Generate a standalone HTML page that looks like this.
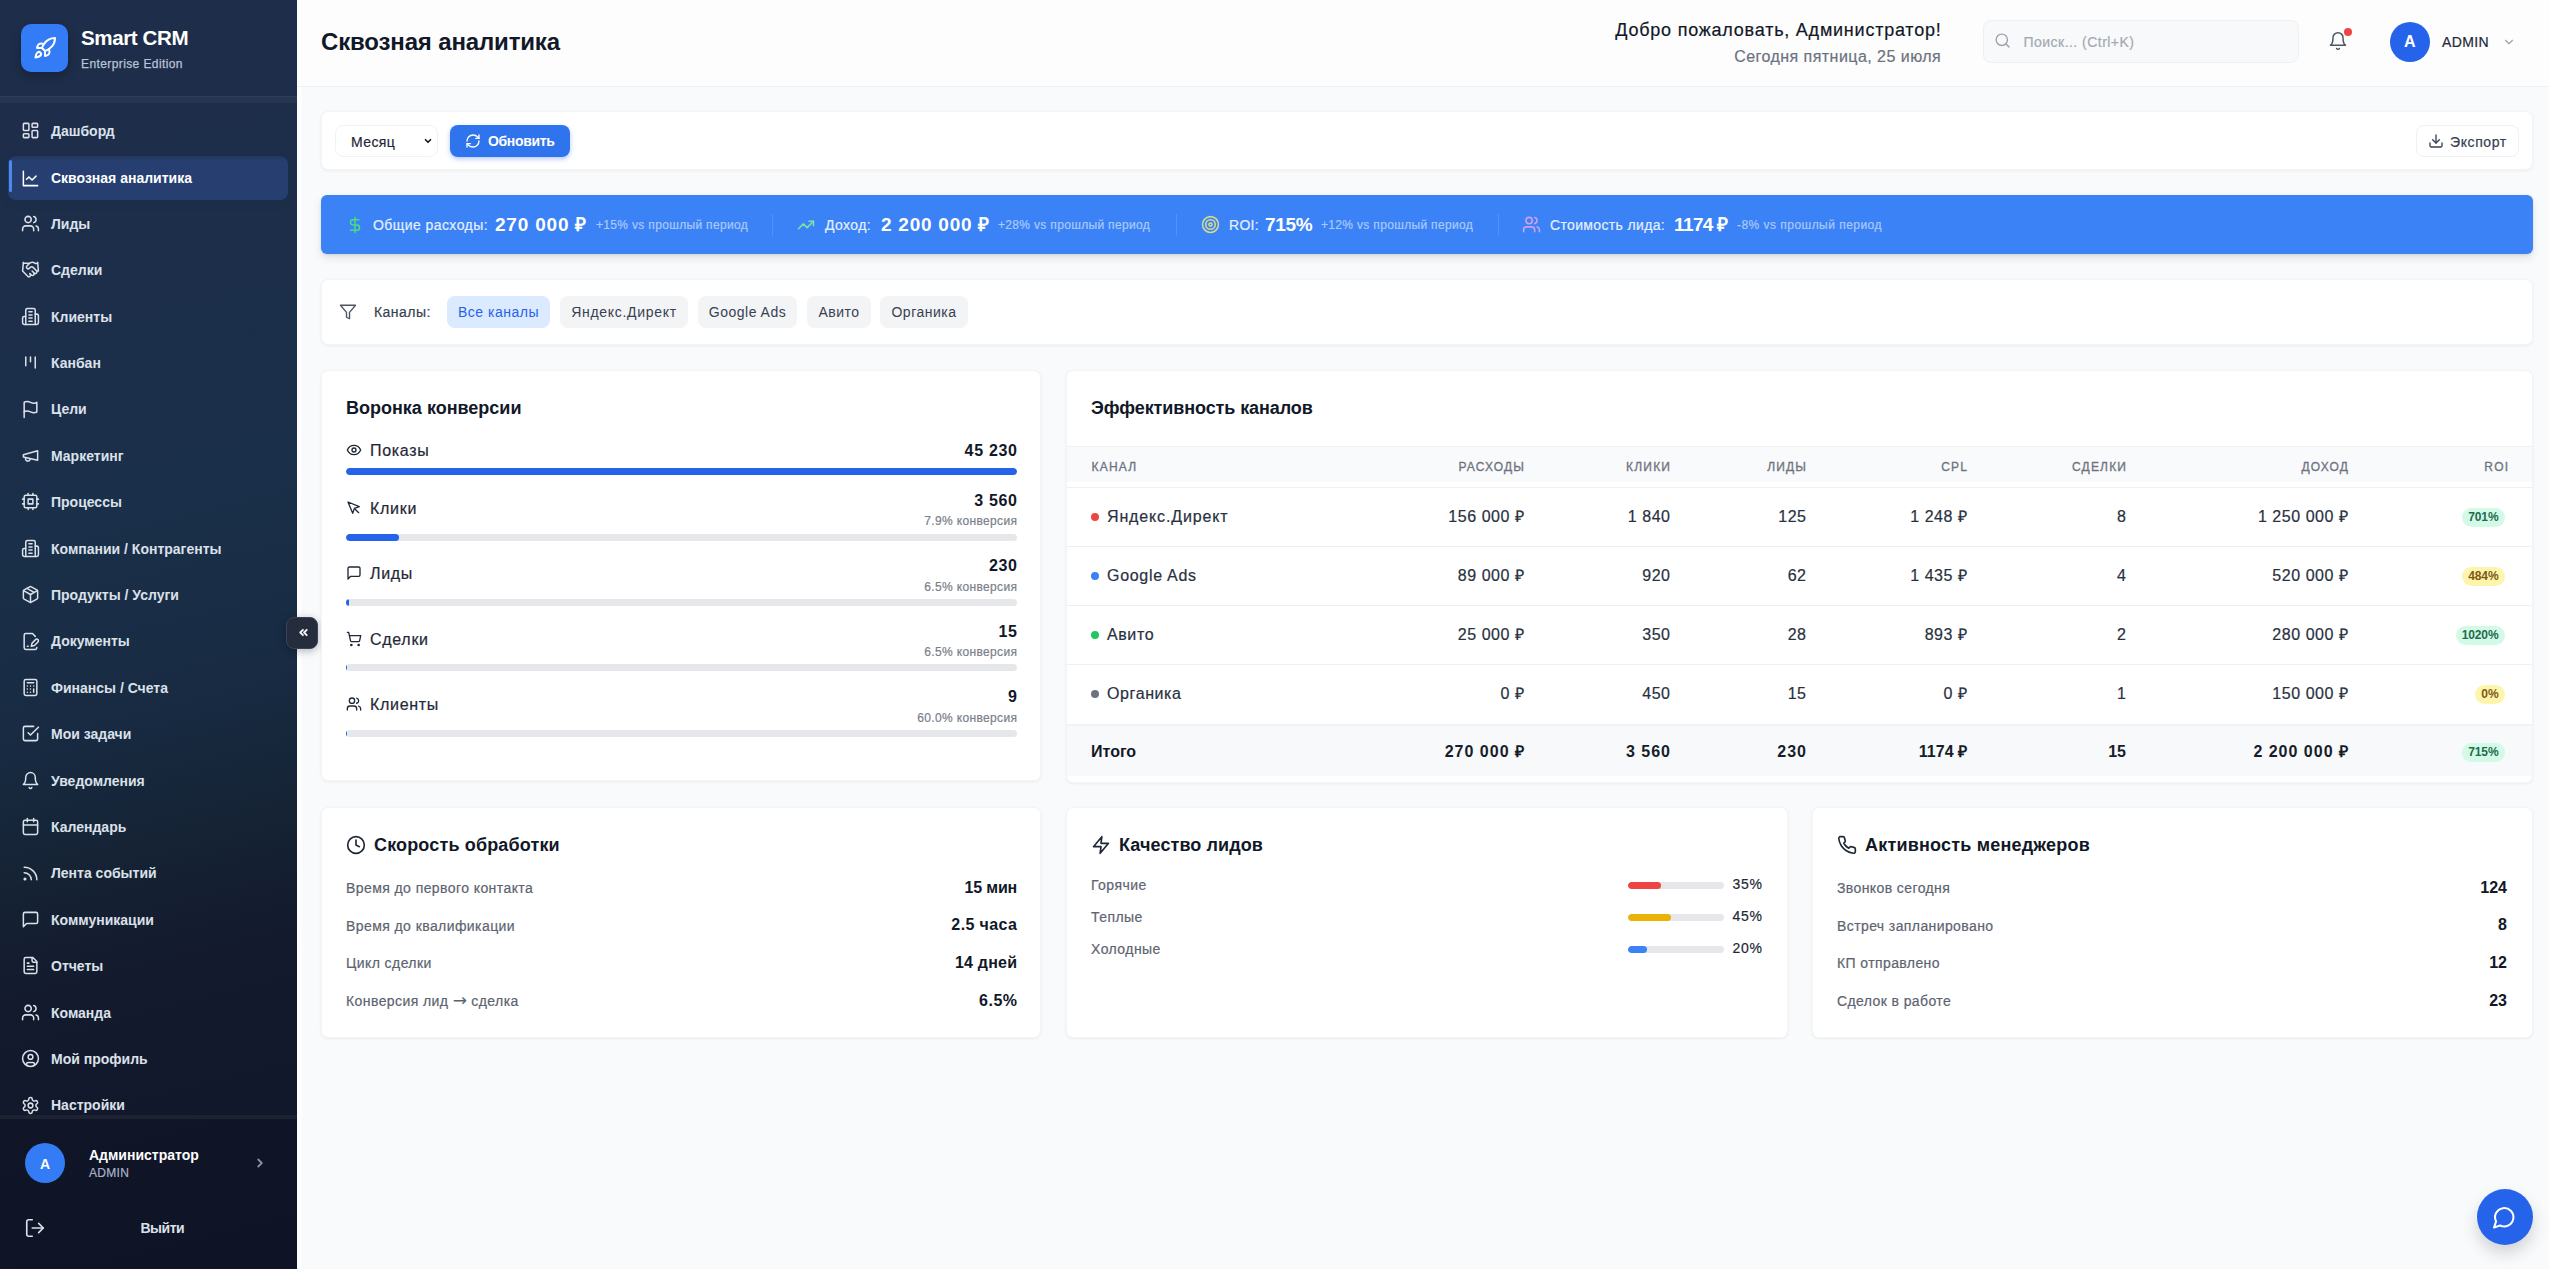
<!DOCTYPE html>
<html lang="ru">
<head>
<meta charset="utf-8">
<title>Smart CRM — Сквозная аналитика</title>
<style>
*{box-sizing:border-box;margin:0;padding:0}
html,body{width:2549px;height:1269px;overflow:hidden}
body{font-family:"Liberation Sans",sans-serif;background:#f9fafb;color:#111827;position:relative}
svg{display:block}
.ic{position:absolute;fill:none;stroke-linecap:round;stroke-linejoin:round}
.t{position:absolute;white-space:nowrap;-webkit-text-stroke:.2px}
.abs{position:absolute}
#sb{position:absolute;left:0;top:0;width:297px;height:1269px;background:linear-gradient(166deg,#1e2d4a 0%,#1d2e4a 18%,#1a2f49 40%,#182b43 55%,#152334 66%,#131a2d 75%,#10162a 100%)}
.card{position:absolute;background:#fff;border:1px solid #f3f4f5;border-radius:7px;box-shadow:0 1px 3px rgba(0,0,0,.06)}
.bsep{position:absolute;top:19px;width:1px;height:22px;background:rgba(255,255,255,.13)}
.chip{position:absolute;top:17px;height:32px;line-height:32px;border-radius:8px;background:#f3f4f6;color:#374151;font-size:14px;text-align:center;white-space:nowrap;letter-spacing:.5px}
.fb{position:absolute;left:24px;width:670.5px;height:7px;border-radius:4px;background:#e5e7eb;overflow:hidden}
.fb i{display:block;height:7px;background:#2563eb;border-radius:4px}
.dot{position:absolute;left:24px;width:8px;height:8px;border-radius:50%}
.bdg{position:absolute;height:19px;line-height:19px;font-size:12px;font-weight:700;border-radius:10px;padding:0 6px;white-space:nowrap;letter-spacing:-.1px}
.bdg.g{background:#d3fae6;color:#1f6b4f}
.bdg.y{background:#fef5ad;color:#7d5a12}
.qb{position:absolute;left:560px;width:96px;height:7px;border-radius:4px;background:#e5e7eb;overflow:hidden}
.qb i{display:block;height:7px;border-radius:4px}
.hl{position:absolute;left:0;height:1px;background:#eff0f2}
</style>
</head>
<body>
<div id="sb">
<div class="abs" style="left:21px;top:24px;width:47px;height:48px;border-radius:10px;background:#347cf6;box-shadow:0 4px 10px rgba(0,0,0,.25)"><svg class="ic" style="left:12px;top:12px;width:24px;height:24px;stroke:#fff;stroke-width:2;" viewBox="0 0 24 24"><path d="M4.5 16.5c-1.5 1.26-2 5-2 5s3.74-.5 5-2c.71-.84.7-2.13-.09-2.91a2.18 2.18 0 0 0-2.91-.09z"/><path d="m12 15-3-3a22 22 0 0 1 2-3.95A12.88 12.88 0 0 1 22 2c0 2.72-.78 7.5-6 11a22.35 22.35 0 0 1-4 2z"/><path d="M9 12H4s.55-3.03 2-4c1.62-1.08 5 0 5 0"/><path d="M12 15v5s3.03-.55 4-2c1.08-1.62 0-5 0-5"/></svg></div>
<div class="t" style="left:81px;top:24.8px;font-size:20.6px;line-height:26px;color:#fff;font-weight:700;-webkit-text-stroke:0;letter-spacing:-0.42px;">Smart CRM</div>
<div class="t" style="left:81px;top:56.8px;font-size:12px;line-height:15px;color:#b9c4d6;letter-spacing:0.4px;-webkit-text-stroke:.25px #b9c4d6;">Enterprise Edition</div>
<div class="abs" style="left:0;top:96px;width:297px;height:7px;background:rgba(255,255,255,.04);border-top:1px solid rgba(255,255,255,.05)"></div>
<div class="abs" style="left:0;top:1115px;width:297px;height:154px;background:rgba(0,0,0,.1);border-top:4px solid rgba(255,255,255,.06)"></div>
<svg class="ic" style="left:21px;top:121.1px;width:19px;height:19px;stroke:#dbe1ea;stroke-width:1.9;" viewBox="0 0 24 24"><rect width="7" height="9" x="3" y="3" rx="1"/><rect width="7" height="5" x="14" y="3" rx="1"/><rect width="7" height="9" x="14" y="12" rx="1"/><rect width="7" height="5" x="3" y="16" rx="1"/></svg>
<div class="t" style="left:51px;top:121.9px;font-size:14px;line-height:18px;color:#dbe1ea;font-weight:700;-webkit-text-stroke:0;">Дашборд</div>
<div class="abs" style="left:8px;top:156px;width:280px;height:44px;border-radius:8px;background:linear-gradient(180deg,#22375f 0%,#263f70 12%,#263f70 100%);box-shadow:0 4px 6px rgba(20,50,70,.45)"></div>
<div class="abs" style="left:9px;top:160px;width:3px;height:32px;border-radius:2px;background:#4d8af0"></div>
<svg class="ic" style="left:21px;top:168.5px;width:19px;height:19px;stroke:#fff;stroke-width:1.9;" viewBox="0 0 24 24"><path d="M3 3v18h18"/><path d="m19 9-5 5-4-4-3 3"/></svg>
<div class="t" style="left:51px;top:169.3px;font-size:14px;line-height:18px;color:#fff;font-weight:700;-webkit-text-stroke:0;">Сквозная аналитика</div>
<svg class="ic" style="left:21px;top:213.9px;width:19px;height:19px;stroke:#dbe1ea;stroke-width:1.9;" viewBox="0 0 24 24"><path d="M16 21v-2a4 4 0 0 0-4-4H6a4 4 0 0 0-4 4v2"/><circle cx="9" cy="7" r="4"/><path d="M22 21v-2a4 4 0 0 0-3-3.87"/><path d="M16 3.13a4 4 0 0 1 0 7.75"/></svg>
<div class="t" style="left:51px;top:214.7px;font-size:14px;line-height:18px;color:#dbe1ea;font-weight:700;-webkit-text-stroke:0;">Лиды</div>
<svg class="ic" style="left:21px;top:260.3px;width:19px;height:19px;stroke:#dbe1ea;stroke-width:1.9;" viewBox="0 0 24 24"><path d="m11 17 2 2a1 1 0 1 0 3-3"/><path d="m14 14 2.5 2.5a1 1 0 1 0 3-3l-3.88-3.88a3 3 0 0 0-4.24 0l-.88.88a1 1 0 1 1-3-3l2.81-2.81a5.79 5.79 0 0 1 7.06-.87l.47.28a2 2 0 0 0 1.42.25L21 4"/><path d="m21 3 1 11h-2"/><path d="M3 3 2 14l6.5 6.5a1 1 0 1 0 3-3"/><path d="M3 4h8"/></svg>
<div class="t" style="left:51px;top:261.1px;font-size:14px;line-height:18px;color:#dbe1ea;font-weight:700;-webkit-text-stroke:0;">Сделки</div>
<svg class="ic" style="left:21px;top:306.7px;width:19px;height:19px;stroke:#dbe1ea;stroke-width:1.9;" viewBox="0 0 24 24"><path d="M6 22V4a2 2 0 0 1 2-2h8a2 2 0 0 1 2 2v18Z"/><path d="M6 12H4a2 2 0 0 0-2 2v6a2 2 0 0 0 2 2h2"/><path d="M18 9h2a2 2 0 0 1 2 2v9a2 2 0 0 1-2 2h-2"/><path d="M10 6h4"/><path d="M10 10h4"/><path d="M10 14h4"/><path d="M10 18h4"/></svg>
<div class="t" style="left:51px;top:307.5px;font-size:14px;line-height:18px;color:#dbe1ea;font-weight:700;-webkit-text-stroke:0;">Клиенты</div>
<svg class="ic" style="left:21px;top:353.1px;width:19px;height:19px;stroke:#dbe1ea;stroke-width:1.9;" viewBox="0 0 24 24"><path d="M6 5v11"/><path d="M12 5v6"/><path d="M18 5v14"/></svg>
<div class="t" style="left:51px;top:353.9px;font-size:14px;line-height:18px;color:#dbe1ea;font-weight:700;-webkit-text-stroke:0;">Канбан</div>
<svg class="ic" style="left:21px;top:399.5px;width:19px;height:19px;stroke:#dbe1ea;stroke-width:1.9;" viewBox="0 0 24 24"><path d="M4 15s1-1 4-1 5 2 8 2 4-1 4-1V3s-1 1-4 1-5-2-8-2-4 1-4 1z"/><line x1="4" x2="4" y1="22" y2="15"/></svg>
<div class="t" style="left:51px;top:400.3px;font-size:14px;line-height:18px;color:#dbe1ea;font-weight:700;-webkit-text-stroke:0;">Цели</div>
<svg class="ic" style="left:21px;top:445.9px;width:19px;height:19px;stroke:#dbe1ea;stroke-width:1.9;" viewBox="0 0 24 24"><path d="m3 11 18-5v12L3 14v-3z"/><path d="M11.6 16.8a3 3 0 1 1-5.8-1.6"/></svg>
<div class="t" style="left:51px;top:446.7px;font-size:14px;line-height:18px;color:#dbe1ea;font-weight:700;-webkit-text-stroke:0;">Маркетинг</div>
<svg class="ic" style="left:21px;top:492.3px;width:19px;height:19px;stroke:#dbe1ea;stroke-width:1.9;" viewBox="0 0 24 24"><rect x="4" y="4" width="16" height="16" rx="2"/><rect x="9" y="9" width="6" height="6"/><path d="M15 2v2"/><path d="M15 20v2"/><path d="M2 15h2"/><path d="M2 9h2"/><path d="M20 15h2"/><path d="M20 9h2"/><path d="M9 2v2"/><path d="M9 20v2"/></svg>
<div class="t" style="left:51px;top:493.1px;font-size:14px;line-height:18px;color:#dbe1ea;font-weight:700;-webkit-text-stroke:0;">Процессы</div>
<svg class="ic" style="left:21px;top:538.7px;width:19px;height:19px;stroke:#dbe1ea;stroke-width:1.9;" viewBox="0 0 24 24"><path d="M6 22V4a2 2 0 0 1 2-2h8a2 2 0 0 1 2 2v18Z"/><path d="M6 12H4a2 2 0 0 0-2 2v6a2 2 0 0 0 2 2h2"/><path d="M18 9h2a2 2 0 0 1 2 2v9a2 2 0 0 1-2 2h-2"/><path d="M10 6h4"/><path d="M10 10h4"/><path d="M10 14h4"/><path d="M10 18h4"/></svg>
<div class="t" style="left:51px;top:539.5px;font-size:14px;line-height:18px;color:#dbe1ea;font-weight:700;-webkit-text-stroke:0;">Компании / Контрагенты</div>
<svg class="ic" style="left:21px;top:585.1px;width:19px;height:19px;stroke:#dbe1ea;stroke-width:1.9;" viewBox="0 0 24 24"><path d="m7.5 4.27 9 5.15"/><path d="M21 8a2 2 0 0 0-1-1.73l-7-4a2 2 0 0 0-2 0l-7 4A2 2 0 0 0 3 8v8a2 2 0 0 0 1 1.73l7 4a2 2 0 0 0 2 0l7-4A2 2 0 0 0 21 16Z"/><path d="m3.3 7 8.7 5 8.7-5"/><path d="M12 22V12"/></svg>
<div class="t" style="left:51px;top:585.9px;font-size:14px;line-height:18px;color:#dbe1ea;font-weight:700;-webkit-text-stroke:0;">Продукты / Услуги</div>
<svg class="ic" style="left:21px;top:631.5px;width:19px;height:19px;stroke:#dbe1ea;stroke-width:1.9;" viewBox="0 0 24 24"><path d="M20 19.5v.5a2 2 0 0 1-2 2H6a2 2 0 0 1-2-2V4a2 2 0 0 1 2-2h8.5L18 5.5"/><path d="M8 18h1"/><path d="M18.42 9.61a2.1 2.1 0 1 1 2.97 2.97L16.95 17 13 18l.99-3.95 4.43-4.44Z"/></svg>
<div class="t" style="left:51px;top:632.3px;font-size:14px;line-height:18px;color:#dbe1ea;font-weight:700;-webkit-text-stroke:0;">Документы</div>
<svg class="ic" style="left:21px;top:677.9px;width:19px;height:19px;stroke:#dbe1ea;stroke-width:1.9;" viewBox="0 0 24 24"><rect width="16" height="20" x="4" y="2" rx="2"/><line x1="8" x2="16" y1="6" y2="6"/><line x1="16" x2="16" y1="14" y2="18"/><path d="M16 10h.01"/><path d="M12 10h.01"/><path d="M8 10h.01"/><path d="M12 14h.01"/><path d="M8 14h.01"/><path d="M12 18h.01"/><path d="M8 18h.01"/></svg>
<div class="t" style="left:51px;top:678.7px;font-size:14px;line-height:18px;color:#dbe1ea;font-weight:700;-webkit-text-stroke:0;">Финансы / Счета</div>
<svg class="ic" style="left:21px;top:724.3px;width:19px;height:19px;stroke:#dbe1ea;stroke-width:1.9;" viewBox="0 0 24 24"><path d="m9 11 3 3L22 4"/><path d="M21 12v7a2 2 0 0 1-2 2H5a2 2 0 0 1-2-2V5a2 2 0 0 1 2-2h11"/></svg>
<div class="t" style="left:51px;top:725.1px;font-size:14px;line-height:18px;color:#dbe1ea;font-weight:700;-webkit-text-stroke:0;">Мои задачи</div>
<svg class="ic" style="left:21px;top:770.7px;width:19px;height:19px;stroke:#dbe1ea;stroke-width:1.9;" viewBox="0 0 24 24"><path d="M6 8a6 6 0 0 1 12 0c0 7 3 9 3 9H3s3-2 3-9"/><path d="M10.3 21a1.94 1.94 0 0 0 3.4 0"/></svg>
<div class="t" style="left:51px;top:771.5px;font-size:14px;line-height:18px;color:#dbe1ea;font-weight:700;-webkit-text-stroke:0;">Уведомления</div>
<svg class="ic" style="left:21px;top:817.1px;width:19px;height:19px;stroke:#dbe1ea;stroke-width:1.9;" viewBox="0 0 24 24"><rect width="18" height="18" x="3" y="4" rx="2" ry="2"/><line x1="16" x2="16" y1="2" y2="6"/><line x1="8" x2="8" y1="2" y2="6"/><line x1="3" x2="21" y1="10" y2="10"/></svg>
<div class="t" style="left:51px;top:817.9px;font-size:14px;line-height:18px;color:#dbe1ea;font-weight:700;-webkit-text-stroke:0;">Календарь</div>
<svg class="ic" style="left:21px;top:863.5px;width:19px;height:19px;stroke:#dbe1ea;stroke-width:1.9;" viewBox="0 0 24 24"><path d="M4 11a9 9 0 0 1 9 9"/><path d="M4 4a16 16 0 0 1 16 16"/><circle cx="5" cy="19" r="1"/></svg>
<div class="t" style="left:51px;top:864.3px;font-size:14px;line-height:18px;color:#dbe1ea;font-weight:700;-webkit-text-stroke:0;">Лента событий</div>
<svg class="ic" style="left:21px;top:909.9px;width:19px;height:19px;stroke:#dbe1ea;stroke-width:1.9;" viewBox="0 0 24 24"><path d="M21 15a2 2 0 0 1-2 2H7l-4 4V5a2 2 0 0 1 2-2h14a2 2 0 0 1 2 2z"/></svg>
<div class="t" style="left:51px;top:910.7px;font-size:14px;line-height:18px;color:#dbe1ea;font-weight:700;-webkit-text-stroke:0;">Коммуникации</div>
<svg class="ic" style="left:21px;top:956.3px;width:19px;height:19px;stroke:#dbe1ea;stroke-width:1.9;" viewBox="0 0 24 24"><path d="M15 2H6a2 2 0 0 0-2 2v16a2 2 0 0 0 2 2h12a2 2 0 0 0 2-2V7Z"/><path d="M14 2v4a2 2 0 0 0 2 2h4"/><path d="M10 9H8"/><path d="M16 13H8"/><path d="M16 17H8"/></svg>
<div class="t" style="left:51px;top:957.1px;font-size:14px;line-height:18px;color:#dbe1ea;font-weight:700;-webkit-text-stroke:0;">Отчеты</div>
<svg class="ic" style="left:21px;top:1002.7px;width:19px;height:19px;stroke:#dbe1ea;stroke-width:1.9;" viewBox="0 0 24 24"><path d="M16 21v-2a4 4 0 0 0-4-4H6a4 4 0 0 0-4 4v2"/><circle cx="9" cy="7" r="4"/><path d="M22 21v-2a4 4 0 0 0-3-3.87"/><path d="M16 3.13a4 4 0 0 1 0 7.75"/></svg>
<div class="t" style="left:51px;top:1003.5px;font-size:14px;line-height:18px;color:#dbe1ea;font-weight:700;-webkit-text-stroke:0;">Команда</div>
<svg class="ic" style="left:21px;top:1049.1px;width:19px;height:19px;stroke:#dbe1ea;stroke-width:1.9;" viewBox="0 0 24 24"><circle cx="12" cy="12" r="10"/><circle cx="12" cy="10" r="3"/><path d="M7 20.662V19a2 2 0 0 1 2-2h6a2 2 0 0 1 2 2v1.662"/></svg>
<div class="t" style="left:51px;top:1049.9px;font-size:14px;line-height:18px;color:#dbe1ea;font-weight:700;-webkit-text-stroke:0;">Мой профиль</div>
<svg class="ic" style="left:21px;top:1095.5px;width:19px;height:19px;stroke:#dbe1ea;stroke-width:1.9;" viewBox="0 0 24 24"><path d="M12.22 2h-.44a2 2 0 0 0-2 2v.18a2 2 0 0 1-1 1.73l-.43.25a2 2 0 0 1-2 0l-.15-.08a2 2 0 0 0-2.73.73l-.22.38a2 2 0 0 0 .73 2.73l.15.1a2 2 0 0 1 1 1.72v.51a2 2 0 0 1-1 1.74l-.15.09a2 2 0 0 0-.73 2.73l.22.38a2 2 0 0 0 2.73.73l.15-.08a2 2 0 0 1 2 0l.43.25a2 2 0 0 1 1 1.73V20a2 2 0 0 0 2 2h.44a2 2 0 0 0 2-2v-.18a2 2 0 0 1 1-1.73l.43-.25a2 2 0 0 1 2 0l.15.08a2 2 0 0 0 2.73-.73l.22-.39a2 2 0 0 0-.73-2.73l-.15-.08a2 2 0 0 1-1-1.74v-.5a2 2 0 0 1 1-1.74l.15-.09a2 2 0 0 0 .73-2.73l-.22-.38a2 2 0 0 0-2.73-.73l-.15.08a2 2 0 0 1-2 0l-.43-.25a2 2 0 0 1-1-1.73V4a2 2 0 0 0-2-2z"/><circle cx="12" cy="12" r="3"/></svg>
<div class="t" style="left:51px;top:1096.3px;font-size:14px;line-height:18px;color:#dbe1ea;font-weight:700;-webkit-text-stroke:0;">Настройки</div>
<div class="abs" style="left:25px;top:1143px;width:40px;height:40px;border-radius:50%;background:#347cf6"></div>
<div class="t" style="left:40px;top:1154.5px;font-size:14px;line-height:18px;color:#fff;font-weight:700;-webkit-text-stroke:0;">A</div>
<div class="t" style="left:89px;top:1145.5px;font-size:14px;line-height:18px;color:#fff;font-weight:700;-webkit-text-stroke:0;">Администратор</div>
<div class="t" style="left:89px;top:1166px;font-size:12px;line-height:15px;color:#a9b4c6;letter-spacing:0.3px;">ADMIN</div>
<svg class="ic" style="left:253px;top:1156px;width:14px;height:14px;stroke:#8390a7;stroke-width:3.2;" viewBox="0 0 24 24"><path d="m9 18 6-6-6-6"/></svg>
<svg class="ic" style="left:24px;top:1217px;width:22px;height:22px;stroke:#dbe1ea;stroke-width:1.8;" viewBox="0 0 24 24"><path d="M9 21H5a2 2 0 0 1-2-2V5a2 2 0 0 1 2-2h4"/><polyline points="16 17 21 12 16 7"/><line x1="21" x2="9" y1="12" y2="12"/></svg>
<div class="t" style="left:140.5px;top:1219px;font-size:14px;line-height:18px;color:#dbe1ea;font-weight:700;-webkit-text-stroke:0;letter-spacing:-0.5px;">Выйти</div>
</div>
<div class="abs" style="left:297px;top:0;width:2252px;height:87px;background:#fdfdfd;border-bottom:1px solid #eef0f2"></div>
<div class="t" style="left:321px;top:27px;font-size:24px;line-height:30px;color:#111827;font-weight:700;-webkit-text-stroke:0;letter-spacing:-0.15px;">Сквозная аналитика</div>
<div class="t" style="right:607.53px;top:18.8px;font-size:18px;line-height:22px;color:#111827;letter-spacing:0.77px;-webkit-text-stroke:.2px #111827;">Добро пожаловать, Администратор!</div>
<div class="t" style="right:607.84px;top:46.5px;font-size:16px;line-height:20px;color:#6b7280;letter-spacing:0.46px;">Сегодня пятница, 25 июля</div>
<div class="abs" style="left:1983px;top:20px;width:316px;height:43px;border:1px solid #eff0f2;border-radius:8px;background:#f8f9fa"></div>
<svg class="ic" style="left:1994px;top:32px;width:17px;height:17px;stroke:#9ca3af;stroke-width:2;" viewBox="0 0 24 24"><circle cx="11" cy="11" r="8"/><path d="m21 21-4.3-4.3"/></svg>
<div class="t" style="left:2023.5px;top:32.8px;font-size:14px;line-height:18px;color:#a3a9b3;letter-spacing:0.47px;">Поиск... (Ctrl+K)</div>
<svg class="ic" style="left:2328px;top:31px;width:20px;height:20px;stroke:#4b5563;stroke-width:1.8;" viewBox="0 0 24 24"><path d="M6 8a6 6 0 0 1 12 0c0 7 3 9 3 9H3s3-2 3-9"/><path d="M10.3 21a1.94 1.94 0 0 0 3.4 0"/></svg>
<div class="abs" style="left:2344px;top:28px;width:8px;height:8px;border-radius:50%;background:#ef4444"></div>
<div class="abs" style="left:2389.8px;top:21.8px;width:40px;height:40px;border-radius:50%;background:#2563eb"></div>
<div class="t" style="left:2404px;top:32px;font-size:16px;line-height:20px;color:#fff;font-weight:700;-webkit-text-stroke:0;">A</div>
<div class="t" style="left:2442px;top:32.5px;font-size:14px;line-height:18px;color:#1f2937;letter-spacing:0.4px;">ADMIN</div>
<svg class="ic" style="left:2502px;top:35px;width:14px;height:14px;stroke:#9ca3af;stroke-width:2;" viewBox="0 0 24 24"><path d="m6 9 6 6 6-6"/></svg>
<div class="abs" style="left:297px;top:87px;width:5px;height:1182px;background:#fdfdfe"></div>
<div class="abs" style="left:286px;top:616.5px;width:31.5px;height:32px;border-radius:8px;background:#252d3c;border:1.5px solid #38425a;box-shadow:0 2px 8px rgba(0,0,0,.28)"><svg class="ic" style="left:9.5px;top:8px;width:13px;height:13px;stroke:#f1f3f6;stroke-width:3.4;" viewBox="0 0 24 24"><path d="m11 17-5-5 5-5"/><path d="m18 17-5-5 5-5"/></svg></div>
<div class="card" style="left:321px;top:111px;width:2212px;height:59px"></div>
<div class="abs" style="left:335px;top:125px;width:103px;height:32px;border:1px solid #f1f2f4;border-radius:8px;background:#fff"></div>
<div class="t" style="left:351px;top:132.5px;font-size:14px;line-height:18px;color:#1f2937;letter-spacing:0.4px;">Месяц</div>
<svg class="ic" style="left:423px;top:136px;width:10px;height:10px;stroke:#111827;stroke-width:4;" viewBox="0 0 24 24"><path d="m6 9 6 6 6-6"/></svg>
<div class="abs" style="left:450px;top:125px;width:120px;height:32px;border-radius:8px;background:#2f74ec;box-shadow:0 2px 5px rgba(37,99,235,.35)"></div>
<svg class="ic" style="left:465px;top:133px;width:16px;height:16px;stroke:#fff;stroke-width:2;" viewBox="0 0 24 24"><path d="M3 12a9 9 0 0 1 9-9 9.75 9.75 0 0 1 6.74 2.74L21 8"/><path d="M21 3v5h-5"/><path d="M21 12a9 9 0 0 1-9 9 9.75 9.75 0 0 1-6.74-2.74L3 16"/><path d="M8 16H3v5"/></svg>
<div class="t" style="left:488px;top:132px;font-size:14px;line-height:18px;color:#fff;font-weight:700;-webkit-text-stroke:0;letter-spacing:-0.35px;">Обновить</div>
<div class="abs" style="left:2416px;top:125px;width:103px;height:32px;border:1px solid #f0f1f3;border-radius:8px;background:#fff"></div>
<svg class="ic" style="left:2428px;top:133px;width:16px;height:16px;stroke:#374151;stroke-width:2;" viewBox="0 0 24 24"><path d="M21 15v4a2 2 0 0 1-2 2H5a2 2 0 0 1-2-2v-4"/><polyline points="7 10 12 15 17 10"/><line x1="12" x2="12" y1="15" y2="3"/></svg>
<div class="t" style="left:2450px;top:132.5px;font-size:14px;line-height:18px;color:#374151;letter-spacing:0.6px;">Экспорт</div>
<div class="abs" style="left:321px;top:195px;width:2212px;height:59px;border-radius:6px;background:#3b82f6;box-shadow:0 4px 8px rgba(0,0,0,.1),0 1px 3px rgba(0,0,0,.08)"></div>
<svg class="ic" style="left:346px;top:216px;width:18px;height:18px;stroke:#4ade80;stroke-width:2;" viewBox="0 0 24 24"><line x1="12" x2="12" y1="2" y2="22"/><path d="M17 5H9.5a3.5 3.5 0 0 0 0 7h5a3.5 3.5 0 0 1 0 7H6"/></svg>
<svg class="ic" style="left:797px;top:216px;width:18px;height:18px;stroke:#7be3a8;stroke-width:2;" viewBox="0 0 24 24"><polyline points="22 7 13.5 15.5 8.5 10.5 2 17"/><polyline points="16 7 22 7 22 13"/></svg>
<svg class="ic" style="left:1201px;top:215px;width:19px;height:19px;stroke:#d2db8c;stroke-width:2;" viewBox="0 0 24 24"><circle cx="12" cy="12" r="10"/><circle cx="12" cy="12" r="6"/><circle cx="12" cy="12" r="2"/></svg>
<svg class="ic" style="left:1522px;top:215px;width:19px;height:19px;stroke:#cfa0f0;stroke-width:2;" viewBox="0 0 24 24"><path d="M16 21v-2a4 4 0 0 0-4-4H6a4 4 0 0 0-4 4v2"/><circle cx="9" cy="7" r="4"/><path d="M22 21v-2a4 4 0 0 0-3-3.87"/><path d="M16 3.13a4 4 0 0 1 0 7.75"/></svg>
<div class="t" style="left:373px;top:216px;font-size:14px;line-height:18px;color:#e6efff;letter-spacing:0.43px;">Общие расходы:</div>
<div class="t" style="left:495px;top:212.5px;font-size:19px;line-height:24px;color:#fff;font-weight:700;-webkit-text-stroke:0;letter-spacing:0.8px;">270 000 ₽</div>
<div class="t" style="left:596px;top:217.5px;font-size:12px;line-height:15px;color:#abc9fb;letter-spacing:0.33px;">+15% vs прошлый период</div>
<div class="t" style="left:825px;top:216px;font-size:14px;line-height:18px;color:#e6efff;letter-spacing:0.4px;">Доход:</div>
<div class="t" style="left:881px;top:212.5px;font-size:19px;line-height:24px;color:#fff;font-weight:700;-webkit-text-stroke:0;letter-spacing:0.75px;">2 200 000 ₽</div>
<div class="t" style="left:998px;top:217.5px;font-size:12px;line-height:15px;color:#abc9fb;letter-spacing:0.33px;">+28% vs прошлый период</div>
<div class="t" style="left:1229px;top:216px;font-size:14px;line-height:18px;color:#e6efff;letter-spacing:0.3px;">ROI:</div>
<div class="t" style="left:1265px;top:212.5px;font-size:19px;line-height:24px;color:#fff;font-weight:700;-webkit-text-stroke:0;letter-spacing:-0.35px;">715%</div>
<div class="t" style="left:1321px;top:217.5px;font-size:12px;line-height:15px;color:#abc9fb;letter-spacing:0.33px;">+12% vs прошлый период</div>
<div class="t" style="left:1550px;top:216px;font-size:14px;line-height:18px;color:#e6efff;letter-spacing:0.35px;">Стоимость лида:</div>
<div class="t" style="left:1674px;top:212.5px;font-size:19px;line-height:24px;color:#fff;font-weight:700;-webkit-text-stroke:0;letter-spacing:-0.6px;">1174 ₽</div>
<div class="t" style="left:1737px;top:217.5px;font-size:12px;line-height:15px;color:#abc9fb;letter-spacing:0.47px;">-8% vs прошлый период</div>
<div class="bsep" style="left:772px;top:214px"></div>
<div class="bsep" style="left:1176px;top:214px"></div>
<div class="bsep" style="left:1498px;top:214px"></div>
<div class="card" style="left:321px;top:279px;width:2212px;height:66px"></div>
<svg class="ic" style="left:339px;top:303px;width:18px;height:18px;stroke:#4b5563;stroke-width:1.8;" viewBox="0 0 24 24"><polygon points="22 3 2 3 10 12.46 10 19 14 21 14 12.46 22 3"/></svg>
<div class="t" style="left:374px;top:302.8px;font-size:14px;line-height:18px;color:#374151;letter-spacing:0.45px;">Каналы:</div>
<div class="chip" style="left:447px;top:296px;width:103px;background:#dbeafe;color:#2563eb">Все каналы</div>
<div class="chip" style="left:560px;top:296px;width:128px;letter-spacing:.7px">Яндекс.Директ</div>
<div class="chip" style="left:698px;top:296px;width:99px;">Google Ads</div>
<div class="chip" style="left:807px;top:296px;width:64px;">Авито</div>
<div class="chip" style="left:880px;top:296px;width:88px;">Органика</div>
<div class="card" style="left:321px;top:370px;width:720px;height:411px"></div>
<div class="t" style="left:346px;top:397px;font-size:18px;line-height:22px;color:#111827;font-weight:700;-webkit-text-stroke:0;">Воронка конверсии</div>
<svg class="ic" style="left:346px;top:442.0px;width:16px;height:16px;stroke:#1f2937;stroke-width:2;" viewBox="0 0 24 24"><path d="M2 12s3-7 10-7 10 7 10 7-3 7-10 7-10-7-10-7Z"/><circle cx="12" cy="12" r="3"/></svg>
<div class="t" style="left:370px;top:440.5px;font-size:16px;line-height:20px;color:#1f2937;letter-spacing:0.7px;">Показы</div>
<div class="t" style="right:1531.3px;top:440.5px;font-size:16px;line-height:20px;color:#111827;font-weight:700;-webkit-text-stroke:0;letter-spacing:0.7px;">45 230</div>
<div class="fb" style="left:346px;top:468px"><i style="width:100%"></i></div>
<svg class="ic" style="left:346px;top:500.0px;width:16px;height:16px;stroke:#1f2937;stroke-width:2;" viewBox="0 0 24 24"><path d="m3 3 7.07 16.97 2.51-7.39 7.39-2.51L3 3z"/><path d="m13 13 6 6"/></svg>
<div class="t" style="left:370px;top:498.5px;font-size:16px;line-height:20px;color:#1f2937;letter-spacing:0.7px;">Клики</div>
<div class="t" style="right:1531.3px;top:490.5px;font-size:16px;line-height:20px;color:#111827;font-weight:700;-webkit-text-stroke:0;letter-spacing:0.7px;">3 560</div>
<div class="t" style="right:1531.65px;top:514px;font-size:12px;line-height:15px;color:#7a808a;letter-spacing:0.35px;">7.9% конверсия</div>
<div class="fb" style="left:346px;top:533.5px"><i style="width:7.9%"></i></div>
<svg class="ic" style="left:346px;top:565.0px;width:16px;height:16px;stroke:#1f2937;stroke-width:2;" viewBox="0 0 24 24"><path d="M21 15a2 2 0 0 1-2 2H7l-4 4V5a2 2 0 0 1 2-2h14a2 2 0 0 1 2 2z"/></svg>
<div class="t" style="left:370px;top:563.5px;font-size:16px;line-height:20px;color:#1f2937;letter-spacing:0.7px;">Лиды</div>
<div class="t" style="right:1531.3px;top:555.5px;font-size:16px;line-height:20px;color:#111827;font-weight:700;-webkit-text-stroke:0;letter-spacing:0.7px;">230</div>
<div class="t" style="right:1531.65px;top:580.1px;font-size:12px;line-height:15px;color:#7a808a;letter-spacing:0.35px;">6.5% конверсия</div>
<div class="fb" style="left:346px;top:599px"><i style="width:0.5%"></i></div>
<svg class="ic" style="left:346px;top:631.0px;width:16px;height:16px;stroke:#1f2937;stroke-width:2;" viewBox="0 0 24 24"><circle cx="8" cy="21" r="1"/><circle cx="19" cy="21" r="1"/><path d="M2.05 2.05h2l2.66 12.42a2 2 0 0 0 2 1.58h9.78a2 2 0 0 0 1.95-1.57l1.65-7.43H5.12"/></svg>
<div class="t" style="left:370px;top:629.5px;font-size:16px;line-height:20px;color:#1f2937;letter-spacing:0.7px;">Сделки</div>
<div class="t" style="right:1531.3px;top:621.5px;font-size:16px;line-height:20px;color:#111827;font-weight:700;-webkit-text-stroke:0;letter-spacing:0.7px;">15</div>
<div class="t" style="right:1531.65px;top:644.9px;font-size:12px;line-height:15px;color:#7a808a;letter-spacing:0.35px;">6.5% конверсия</div>
<div class="fb" style="left:346px;top:664px"><i style="width:0.15%"></i></div>
<svg class="ic" style="left:346px;top:696.0px;width:16px;height:16px;stroke:#1f2937;stroke-width:2;" viewBox="0 0 24 24"><path d="M16 21v-2a4 4 0 0 0-4-4H6a4 4 0 0 0-4 4v2"/><circle cx="9" cy="7" r="4"/><path d="M22 21v-2a4 4 0 0 0-3-3.87"/><path d="M16 3.13a4 4 0 0 1 0 7.75"/></svg>
<div class="t" style="left:370px;top:694.5px;font-size:16px;line-height:20px;color:#1f2937;letter-spacing:0.7px;">Клиенты</div>
<div class="t" style="right:1531.3px;top:687px;font-size:16px;line-height:20px;color:#111827;font-weight:700;-webkit-text-stroke:0;letter-spacing:0.7px;">9</div>
<div class="t" style="right:1531.65px;top:711.1px;font-size:12px;line-height:15px;color:#7a808a;letter-spacing:0.35px;">60.0% конверсия</div>
<div class="fb" style="left:346px;top:730.3px"><i style="width:0.1%"></i></div>
<div class="card" style="left:1066px;top:370px;width:1467px;height:413px"></div>
<div class="t" style="left:1091px;top:397px;font-size:18px;line-height:22px;color:#111827;font-weight:700;-webkit-text-stroke:0;letter-spacing:-0.1px;">Эффективность каналов</div>
<div class="abs" style="left:1067px;top:446px;width:1465px;height:36px;background:#f9fafb;border-top:1px solid #f0f1f3"></div><div class="hl" style="left:1067px;width:1465px;top:487px"></div>
<div class="abs" style="left:1067px;top:724px;width:1465px;height:52px;background:#f8f9fa;border-top:2px solid #f1f2f4"></div>
<div class="t" style="left:1091.5px;top:459.5px;font-size:12px;line-height:15px;color:#6b7280;letter-spacing:1.2px;-webkit-text-stroke:.3px #6b7280;">КАНАЛ</div>
<div class="t" style="right:1023.8px;top:459.5px;font-size:12px;line-height:15px;color:#6f7480;letter-spacing:1.2px;-webkit-text-stroke:.3px #6b7280;">РАСХОДЫ</div>
<div class="t" style="right:877.8px;top:459.5px;font-size:12px;line-height:15px;color:#6f7480;letter-spacing:1.2px;-webkit-text-stroke:.3px #6b7280;">КЛИКИ</div>
<div class="t" style="right:741.8px;top:459.5px;font-size:12px;line-height:15px;color:#6f7480;letter-spacing:1.2px;-webkit-text-stroke:.3px #6b7280;">ЛИДЫ</div>
<div class="t" style="right:580.8px;top:459.5px;font-size:12px;line-height:15px;color:#6f7480;letter-spacing:1.2px;-webkit-text-stroke:.3px #6b7280;">CPL</div>
<div class="t" style="right:421.8px;top:459.5px;font-size:12px;line-height:15px;color:#6f7480;letter-spacing:1.2px;-webkit-text-stroke:.3px #6b7280;">СДЕЛКИ</div>
<div class="t" style="right:199.8px;top:459.5px;font-size:12px;line-height:15px;color:#6f7480;letter-spacing:1.2px;-webkit-text-stroke:.3px #6b7280;">ДОХОД</div>
<div class="t" style="right:39.8px;top:459.5px;font-size:12px;line-height:15px;color:#6f7480;letter-spacing:1.2px;-webkit-text-stroke:.3px #6b7280;">ROI</div>
<div class="dot" style="left:1091px;top:513px;background:#ef4444"></div>
<div class="t" style="left:1107px;top:506.5px;font-size:16px;line-height:20px;color:#293140;letter-spacing:0.85px;">Яндекс.Директ</div>
<div class="t" style="right:1024.45px;top:506.5px;font-size:16px;line-height:20px;color:#293140;letter-spacing:0.55px;">156 000 ₽</div>
<div class="t" style="right:878.45px;top:506.5px;font-size:16px;line-height:20px;color:#293140;letter-spacing:0.55px;">1 840</div>
<div class="t" style="right:742.45px;top:506.5px;font-size:16px;line-height:20px;color:#293140;letter-spacing:0.55px;">125</div>
<div class="t" style="right:581.45px;top:506.5px;font-size:16px;line-height:20px;color:#293140;letter-spacing:0.55px;">1 248 ₽</div>
<div class="t" style="right:422.45px;top:506.5px;font-size:16px;line-height:20px;color:#293140;letter-spacing:0.55px;">8</div>
<div class="t" style="right:200.45px;top:506.5px;font-size:16px;line-height:20px;color:#293140;letter-spacing:0.55px;">1 250 000 ₽</div>
<div class="bdg g" style="right:44.5px;top:508px">701%</div>
<div class="hl" style="left:1067px;width:1465px;top:546px"></div>
<div class="dot" style="left:1091px;top:572px;background:#3b82f6"></div>
<div class="t" style="left:1107px;top:565.5px;font-size:16px;line-height:20px;color:#293140;letter-spacing:0.7px;">Google Ads</div>
<div class="t" style="right:1024.45px;top:565.5px;font-size:16px;line-height:20px;color:#293140;letter-spacing:0.55px;">89 000 ₽</div>
<div class="t" style="right:878.45px;top:565.5px;font-size:16px;line-height:20px;color:#293140;letter-spacing:0.55px;">920</div>
<div class="t" style="right:742.45px;top:565.5px;font-size:16px;line-height:20px;color:#293140;letter-spacing:0.55px;">62</div>
<div class="t" style="right:581.45px;top:565.5px;font-size:16px;line-height:20px;color:#293140;letter-spacing:0.55px;">1 435 ₽</div>
<div class="t" style="right:422.45px;top:565.5px;font-size:16px;line-height:20px;color:#293140;letter-spacing:0.55px;">4</div>
<div class="t" style="right:200.45px;top:565.5px;font-size:16px;line-height:20px;color:#293140;letter-spacing:0.55px;">520 000 ₽</div>
<div class="bdg y" style="right:44.5px;top:567px">484%</div>
<div class="hl" style="left:1067px;width:1465px;top:605px"></div>
<div class="dot" style="left:1091px;top:631px;background:#22c55e"></div>
<div class="t" style="left:1107px;top:624.5px;font-size:16px;line-height:20px;color:#293140;letter-spacing:0.6px;">Авито</div>
<div class="t" style="right:1024.45px;top:624.5px;font-size:16px;line-height:20px;color:#293140;letter-spacing:0.55px;">25 000 ₽</div>
<div class="t" style="right:878.45px;top:624.5px;font-size:16px;line-height:20px;color:#293140;letter-spacing:0.55px;">350</div>
<div class="t" style="right:742.45px;top:624.5px;font-size:16px;line-height:20px;color:#293140;letter-spacing:0.55px;">28</div>
<div class="t" style="right:581.45px;top:624.5px;font-size:16px;line-height:20px;color:#293140;letter-spacing:0.55px;">893 ₽</div>
<div class="t" style="right:422.45px;top:624.5px;font-size:16px;line-height:20px;color:#293140;letter-spacing:0.55px;">2</div>
<div class="t" style="right:200.45px;top:624.5px;font-size:16px;line-height:20px;color:#293140;letter-spacing:0.55px;">280 000 ₽</div>
<div class="bdg g" style="right:44.5px;top:626px">1020%</div>
<div class="hl" style="left:1067px;width:1465px;top:664px"></div>
<div class="dot" style="left:1091px;top:690px;background:#6b7280"></div>
<div class="t" style="left:1107px;top:683.5px;font-size:16px;line-height:20px;color:#293140;letter-spacing:0.6px;">Органика</div>
<div class="t" style="right:1024.45px;top:683.5px;font-size:16px;line-height:20px;color:#293140;letter-spacing:0.55px;">0 ₽</div>
<div class="t" style="right:878.45px;top:683.5px;font-size:16px;line-height:20px;color:#293140;letter-spacing:0.55px;">450</div>
<div class="t" style="right:742.45px;top:683.5px;font-size:16px;line-height:20px;color:#293140;letter-spacing:0.55px;">15</div>
<div class="t" style="right:581.45px;top:683.5px;font-size:16px;line-height:20px;color:#293140;letter-spacing:0.55px;">0 ₽</div>
<div class="t" style="right:422.45px;top:683.5px;font-size:16px;line-height:20px;color:#293140;letter-spacing:0.55px;">1</div>
<div class="t" style="right:200.45px;top:683.5px;font-size:16px;line-height:20px;color:#293140;letter-spacing:0.55px;">150 000 ₽</div>
<div class="bdg y" style="right:44.5px;top:685px">0%</div>
<div class="t" style="left:1091px;top:741.5px;font-size:16px;line-height:20px;color:#111827;font-weight:700;-webkit-text-stroke:0;">Итого</div>
<div class="t" style="right:1024.0px;top:741.5px;font-size:16px;line-height:20px;color:#161d2b;font-weight:700;-webkit-text-stroke:0;letter-spacing:1.0px;">270 000 ₽</div>
<div class="t" style="right:878.0px;top:741.5px;font-size:16px;line-height:20px;color:#161d2b;font-weight:700;-webkit-text-stroke:0;letter-spacing:1.0px;">3 560</div>
<div class="t" style="right:742.0px;top:741.5px;font-size:16px;line-height:20px;color:#161d2b;font-weight:700;-webkit-text-stroke:0;letter-spacing:1.0px;">230</div>
<div class="t" style="right:582px;top:741.5px;font-size:16px;line-height:20px;color:#161d2b;font-weight:700;-webkit-text-stroke:0;">1174 ₽</div>
<div class="t" style="right:423px;top:741.5px;font-size:16px;line-height:20px;color:#161d2b;font-weight:700;-webkit-text-stroke:0;">15</div>
<div class="t" style="right:200.0px;top:741.5px;font-size:16px;line-height:20px;color:#161d2b;font-weight:700;-webkit-text-stroke:0;letter-spacing:1.0px;">2 200 000 ₽</div>
<div class="bdg g" style="right:44.5px;top:743px">715%</div>
<div class="card" style="left:321px;top:807px;width:720px;height:231px"></div>
<svg class="ic" style="left:346px;top:835px;width:20px;height:20px;stroke:#1f2937;stroke-width:2;" viewBox="0 0 24 24"><circle cx="12" cy="12" r="10"/><polyline points="12 6 12 12 16 14"/></svg>
<div class="t" style="left:374px;top:834px;font-size:18px;line-height:22px;color:#111827;font-weight:700;-webkit-text-stroke:0;letter-spacing:0.15px;">Скорость обработки</div>
<div class="t" style="left:346px;top:879px;font-size:14px;line-height:18px;color:#5d6470;letter-spacing:0.42px;">Время до первого контакта</div>
<div class="t" style="right:1532px;top:877.5px;font-size:16px;line-height:20px;color:#111827;font-weight:700;-webkit-text-stroke:0;letter-spacing:-0.2px;">15 мин</div>
<div class="t" style="left:346px;top:916.5px;font-size:14px;line-height:18px;color:#5d6470;letter-spacing:0.42px;">Время до квалификации</div>
<div class="t" style="right:1531.6px;top:915px;font-size:16px;line-height:20px;color:#111827;font-weight:700;-webkit-text-stroke:0;letter-spacing:0.4px;">2.5 часа</div>
<div class="t" style="left:346px;top:954px;font-size:14px;line-height:18px;color:#5d6470;letter-spacing:0.42px;">Цикл сделки</div>
<div class="t" style="right:1531.8px;top:952.5px;font-size:16px;line-height:20px;color:#111827;font-weight:700;-webkit-text-stroke:0;letter-spacing:0.2px;">14 дней</div>
<div class="t" style="left:346px;top:992px;font-size:14px;line-height:18px;color:#5d6470;letter-spacing:0.42px;">Конверсия лид <span style="font-family:'DejaVu Sans',sans-serif;font-size:17px;line-height:0;letter-spacing:0;-webkit-text-stroke:0">→</span> сделка</div>
<div class="t" style="right:1531.5px;top:990.5px;font-size:16px;line-height:20px;color:#111827;font-weight:700;-webkit-text-stroke:0;letter-spacing:0.5px;">6.5%</div>
<div class="card" style="left:1066px;top:807px;width:722px;height:231px"></div>
<svg class="ic" style="left:1091px;top:835px;width:20px;height:20px;stroke:#1f2937;stroke-width:2;" viewBox="0 0 24 24"><polygon points="13 2 3 14 12 14 11 22 21 10 12 10 13 2"/></svg>
<div class="t" style="left:1119px;top:834px;font-size:18px;line-height:22px;color:#111827;font-weight:700;-webkit-text-stroke:0;letter-spacing:0.1px;">Качество лидов</div>
<div class="t" style="left:1091px;top:876px;font-size:14px;line-height:18px;color:#5d6470;letter-spacing:0.45px;">Горячие</div>
<div class="qb" style="left:1627.5px;top:881.8px"><i style="width:35%;background:#ef4444"></i></div>
<div class="t" style="right:786.3px;top:875px;font-size:14px;line-height:18px;color:#1f2937;letter-spacing:0.7px;-webkit-text-stroke:.2px #1f2937;">35%</div>
<div class="t" style="left:1091px;top:908px;font-size:14px;line-height:18px;color:#5d6470;letter-spacing:0.45px;">Теплые</div>
<div class="qb" style="left:1627.5px;top:913.8px"><i style="width:45%;background:#eab308"></i></div>
<div class="t" style="right:786.3px;top:907px;font-size:14px;line-height:18px;color:#1f2937;letter-spacing:0.7px;-webkit-text-stroke:.2px #1f2937;">45%</div>
<div class="t" style="left:1091px;top:939.8px;font-size:14px;line-height:18px;color:#5d6470;letter-spacing:0.45px;">Холодные</div>
<div class="qb" style="left:1627.5px;top:945.6px"><i style="width:20%;background:#3b82f6"></i></div>
<div class="t" style="right:786.3px;top:938.8px;font-size:14px;line-height:18px;color:#1f2937;letter-spacing:0.7px;-webkit-text-stroke:.2px #1f2937;">20%</div>
<div class="card" style="left:1812px;top:807px;width:721px;height:231px"></div>
<svg class="ic" style="left:1837px;top:835px;width:20px;height:20px;stroke:#1f2937;stroke-width:2;" viewBox="0 0 24 24"><path d="M22 16.92v3a2 2 0 0 1-2.18 2 19.79 19.79 0 0 1-8.63-3.07 19.5 19.5 0 0 1-6-6 19.79 19.79 0 0 1-3.07-8.67A2 2 0 0 1 4.11 2h3a2 2 0 0 1 2 1.72 12.84 12.84 0 0 0 .7 2.81 2 2 0 0 1-.45 2.11L8.09 9.91a16 16 0 0 0 6 6l1.27-1.27a2 2 0 0 1 2.11-.45 12.84 12.84 0 0 0 2.81.7A2 2 0 0 1 22 16.92z"/></svg>
<div class="t" style="left:1865px;top:834px;font-size:18px;line-height:22px;color:#111827;font-weight:700;-webkit-text-stroke:0;letter-spacing:0.2px;">Активность менеджеров</div>
<div class="t" style="left:1837px;top:879px;font-size:14px;line-height:18px;color:#5d6470;letter-spacing:0.4px;">Звонков сегодня</div>
<div class="t" style="right:42px;top:877.5px;font-size:16px;line-height:20px;color:#111827;font-weight:700;-webkit-text-stroke:0;">124</div>
<div class="t" style="left:1837px;top:916.5px;font-size:14px;line-height:18px;color:#5d6470;letter-spacing:0.4px;">Встреч запланировано</div>
<div class="t" style="right:42px;top:915px;font-size:16px;line-height:20px;color:#111827;font-weight:700;-webkit-text-stroke:0;">8</div>
<div class="t" style="left:1837px;top:954px;font-size:14px;line-height:18px;color:#5d6470;letter-spacing:0.4px;">КП отправлено</div>
<div class="t" style="right:42px;top:952.5px;font-size:16px;line-height:20px;color:#111827;font-weight:700;-webkit-text-stroke:0;">12</div>
<div class="t" style="left:1837px;top:992px;font-size:14px;line-height:18px;color:#5d6470;letter-spacing:0.4px;">Сделок в работе</div>
<div class="t" style="right:42px;top:990.5px;font-size:16px;line-height:20px;color:#111827;font-weight:700;-webkit-text-stroke:0;">23</div>
<div class="abs" style="left:2476.7px;top:1189px;width:56px;height:56px;border-radius:50%;background:#2563eb;box-shadow:0 8px 16px rgba(0,0,0,.16)"><svg class="ic" style="left:15.5px;top:16px;width:24.5px;height:24.5px;stroke:#fff;stroke-width:2;" viewBox="0 0 24 24"><path d="M7.9 20A9 9 0 1 0 4 16.1L2 22Z"/></svg></div>
</body>
</html>
